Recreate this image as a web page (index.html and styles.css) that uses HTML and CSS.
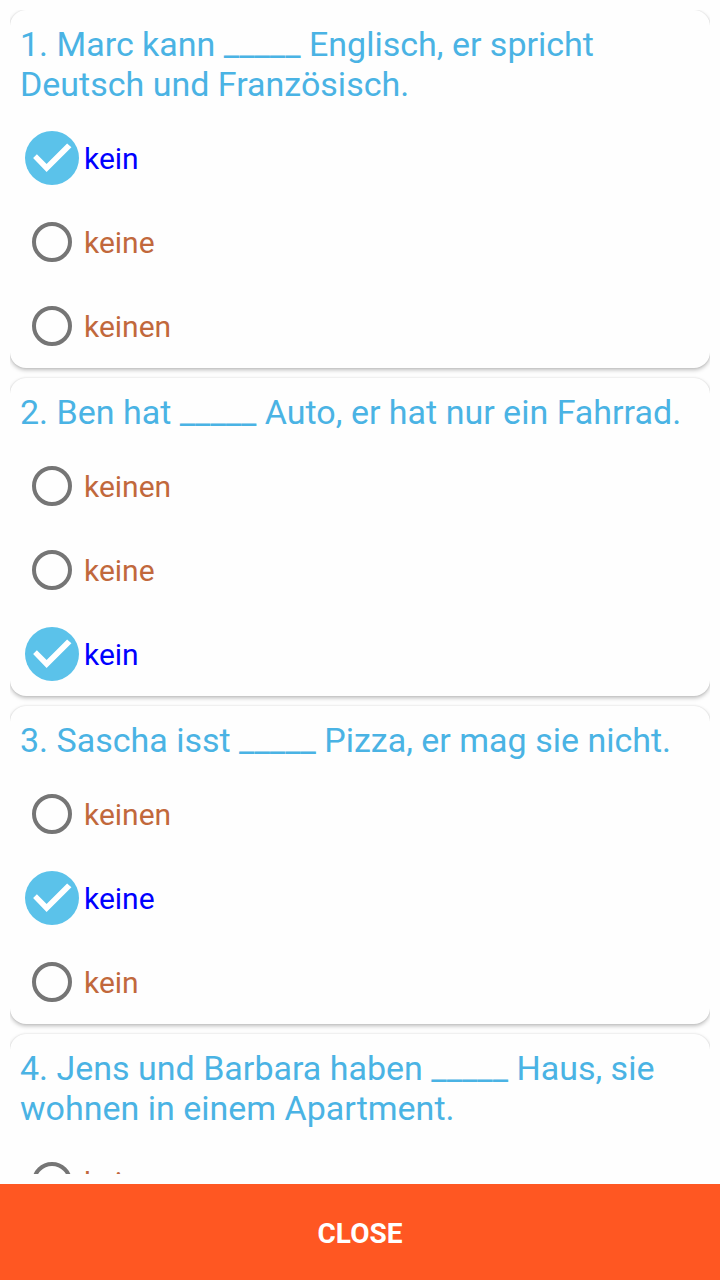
FILE: index.html
```html
<!DOCTYPE html>
<html lang="de">
<head>
<meta charset="utf-8">
<meta name="viewport" content="width=device-width, initial-scale=1">
<title>Quiz</title>
<link rel="stylesheet" href="styles.css">
</head>
<body>
<main class="quiz">
  <section class="card" role="radiogroup" aria-labelledby="t1">
    <h2 class="question" id="t1">1. Marc kann _____ Englisch, er spricht Deutsch und Französisch.</h2>
    <label class="option"><input class="radio" type="radio" name="q1" checked><span class="answer">kein</span></label>
    <label class="option"><input class="radio" type="radio" name="q1"><span class="answer">keine</span></label>
    <label class="option"><input class="radio" type="radio" name="q1"><span class="answer">keinen</span></label>
  </section>
  <section class="card" role="radiogroup" aria-labelledby="t2">
    <h2 class="question" id="t2">2. Ben hat _____ Auto, er hat nur ein Fahrrad.</h2>
    <label class="option"><input class="radio" type="radio" name="q2"><span class="answer">keinen</span></label>
    <label class="option"><input class="radio" type="radio" name="q2"><span class="answer">keine</span></label>
    <label class="option"><input class="radio" type="radio" name="q2" checked><span class="answer">kein</span></label>
  </section>
  <section class="card" role="radiogroup" aria-labelledby="t3">
    <h2 class="question" id="t3">3. Sascha isst _____ Pizza, er mag sie nicht.</h2>
    <label class="option"><input class="radio" type="radio" name="q3"><span class="answer">keinen</span></label>
    <label class="option"><input class="radio" type="radio" name="q3" checked><span class="answer">keine</span></label>
    <label class="option"><input class="radio" type="radio" name="q3"><span class="answer">kein</span></label>
  </section>
  <section class="card" role="radiogroup" aria-labelledby="t4">
    <h2 class="question" id="t4">4. Jens und Barbara haben _____ Haus, sie wohnen in einem Apartment.</h2>
    <label class="option"><input class="radio" type="radio" name="q4"><span class="answer">kein</span></label>
  </section>
</main>
<button class="close" type="button">CLOSE</button>
</body>
</html>
```
FILE: styles.css
```css
*,
*::before {
  box-sizing: border-box;
}

body {
  margin: 0;
  height: 100vh;
  display: flex;
  flex-direction: column;
  background: #fefefe;
  font-family: Roboto, "Liberation Sans", sans-serif;
}

.quiz {
  flex: 1;
  min-height: 0;
  margin: 10px;
  overflow-x: hidden;
  overflow-y: auto;
  scrollbar-width: none;
}

.card {
  margin-bottom: 10px;
  border-radius: 16px;
  background: #fefefe;
  box-shadow: 0 2px 4px rgba(0, 0, 0, 0.26), 0 0 2px rgba(0, 0, 0, 0.1);
}

.question {
  margin: 0;
  padding: 14px 10px 12px;
  color: #4ab3e4;
  font-size: 34px;
  font-weight: 400;
  line-height: 40px;
}

.option {
  display: flex;
  align-items: center;
  height: 84px;
  padding-left: 15px;
  gap: 5px;
  color: #c1683c;
  font-size: 30px;
  line-height: 36px;
}

.option:has(:checked) {
  color: #0000ff;
}

.answer {
  padding-top: 2px;
}

.radio {
  appearance: none;
  flex: none;
  display: grid;
  place-items: center;
  width: 54px;
  height: 54px;
  margin: 0;
  border-radius: 50%;
}

.radio::before {
  content: "";
  width: 40px;
  height: 40px;
  border: 4px solid #757575;
  border-radius: 50%;
}

.radio:checked {
  background: #5bc2ea;
}

.radio:checked::before {
  width: 54px;
  height: 54px;
  border: 0;
  border-radius: 0;
  background: #ffffff;
  clip-path: polygon(15% 50%, 22% 43%, 40% 61%, 78% 23%, 86% 30%, 40% 76%);
}

.close {
  height: 96px;
  padding: 2px 0 0;
  border: 0;
  background: #ff5722;
  color: #ffffff;
  font-family: inherit;
  font-size: 28px;
  font-weight: 700;
}
```
